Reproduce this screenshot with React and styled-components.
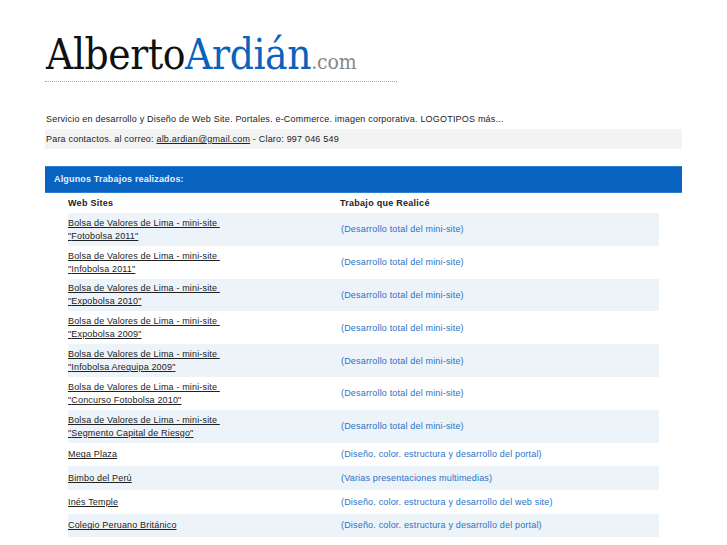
import React from "react";
import styled, { createGlobalStyle } from "styled-components";

const GlobalStyle = createGlobalStyle`
  html, body {
    margin: 0;
    padding: 0;
    background: #fff;
    overflow: hidden;
  }
  body {
    font-family: "Liberation Sans", Arial, sans-serif;
    font-size: 9px;
    color: #222;
  }
`;

const Page = styled.div`
  width: 727px;
  height: 545px;
  padding: 0 45px;
  box-sizing: border-box;
`;

const Logo = styled.div`
  width: 352px;
  height: 82px;
  box-sizing: border-box;
  padding-top: 30px;
  padding-left: 1px;
  border-bottom: 1px dotted #9aa7b5;
  font-family: "DejaVu Serif", serif;
  font-stretch: condensed;
  font-size: 42px;
  line-height: 50px;
  letter-spacing: -0.4px;
  color: #111;
  white-space: nowrap;
`;

const Blue = styled.span`
  color: #0a62bd;
`;

const Tld = styled.span`
  font-size: 21px;
  letter-spacing: -0.1px;
  color: #888;
`;

const Intro = styled.p`
  margin: 31px 0 0;
  padding-left: 1px;
  line-height: 12px;
  letter-spacing: 0.2px;
  color: #222;
`;

const Contact = styled.p`
  margin: 4px 0 0;
  padding-left: 1px;
  height: 20px;
  line-height: 21px;
  background: #f3f3f3;
  letter-spacing: 0.2px;
`;

const Mail = styled.a`
  color: #222;
  text-decoration: underline;
`;

const Banner = styled.h2`
  margin: 17px 0 0;
  height: 27px;
  box-sizing: border-box;
  padding-left: 9px;
  background: #0862bf;
  border: 1px solid #2f7fd0;
  border-width: 1px 0;
  color: #e8f0fa;
  font-size: 9px;
  font-weight: bold;
  line-height: 24px;
  letter-spacing: 0.17px;
`;

const Table = styled.table`
  margin-left: 23px;
  width: 591px;
  border-collapse: collapse;
  table-layout: fixed;
`;

const Head = styled.th`
  height: 20px;
  padding: 0;
  text-align: left;
  font-size: 9px;
  line-height: 18px;
  letter-spacing: 0.27px;
  color: #222;
  width: ${(p) => (p.$second ? "auto" : "272px")};
`;

const Row = styled.tr`
  background: ${(p) => (p.$shaded ? "#ecf3f9" : "#fff")};
`;

const Cell = styled.td`
  padding: 0;
  height: ${(p) => (p.$tall ? "32.8px" : "23.7px")};
  vertical-align: middle;
`;

const SiteLink = styled.a`
  display: inline-block;
  padding-top: 1px;
  color: #222;
  line-height: 13px;
  letter-spacing: 0.16px;
  text-decoration: underline;
`;

const Work = styled.span`
  display: inline-block;
  padding-left: 1px;
  color: #2a72c8;
  letter-spacing: 0.18px;
`;

const mini = "(Desarrollo total del mini-site)";
const portal = "(Diseño. color. estructura y desarrollo del portal)";

const jobs = [
  { site: "Fotobolsa 2011", work: mini },
  { site: "Infobolsa 2011", work: mini },
  { site: "Expobolsa 2010", work: mini },
  { site: "Expobolsa 2009", work: mini },
  { site: "Infobolsa Arequipa 2009", work: mini },
  { site: "Concurso Fotobolsa 2010", work: mini },
  { site: "Segmento Capital de Riesgo", work: mini },
  { name: "Mega Plaza", work: portal },
  { name: "Bimbo del Perú", work: "(Varias presentaciones multimedias)" },
  { name: "Inés Temple", work: "(Diseño. color. estructura y desarrollo del web site)" },
  { name: "Colegio Peruano Británico", work: portal },
];

export default function App() {
  return (
    <Page>
      <GlobalStyle />
      <Logo>
        Alberto<Blue>Ardián</Blue>
        <Tld>.com</Tld>
      </Logo>
      <Intro>
        Servicio en desarrollo y Diseño de Web Site. Portales. e-Commerce. imagen corporativa. LOGOTIPOS más...
      </Intro>
      <Contact>
        Para contactos. al correo: <Mail href="#">alb.ardian@gmail.com</Mail> - Claro: 997 046 549
      </Contact>
      <Banner>Algunos Trabajos realizados:</Banner>
      <Table>
        <thead>
          <tr>
            <Head>Web Sites</Head>
            <Head $second>Trabajo que Realicé</Head>
          </tr>
        </thead>
        <tbody>
          {jobs.map((job, i) => (
            <Row key={i} $shaded={i % 2 === 0}>
              <Cell $tall={!!job.site}>
                <SiteLink href="#">
                  {job.site ? (
                    <>
                      Bolsa de Valores de Lima - mini-site&nbsp;
                      <br />
                      "{job.site}"
                    </>
                  ) : (
                    job.name
                  )}
                </SiteLink>
              </Cell>
              <Cell $tall={!!job.site}>
                <Work>{job.work}</Work>
              </Cell>
            </Row>
          ))}
        </tbody>
      </Table>
    </Page>
  );
}
